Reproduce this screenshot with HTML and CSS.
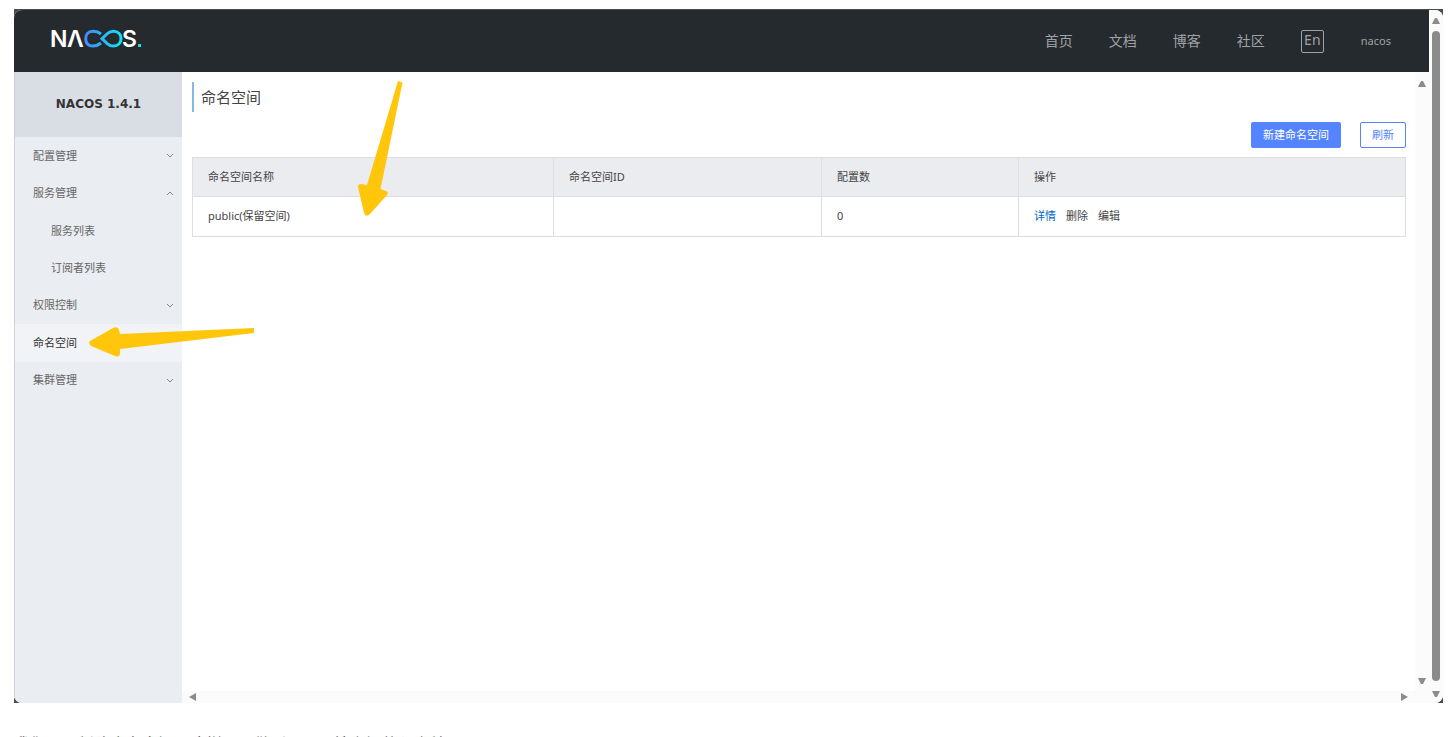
FILE: index.html
```html
<!DOCTYPE html>
<html lang="zh-CN">
<head>
<meta charset="utf-8">
<title>Nacos</title>
<link rel="stylesheet" href="styles.css">
</head>
<body>
<div class="window">
  <div class="screen">
    <div class="app">
      <header class="topbar">
        <a href="#" class="logo" aria-label="Nacos">
          <svg width="94" height="24" viewBox="0 0 94 24">
            <defs>
              <linearGradient id="loop" gradientUnits="userSpaceOnUse" x1="34" y1="0" x2="72" y2="0">
                <stop offset="0" stop-color="#4688ff"/>
                <stop offset="1" stop-color="#12e4f5"/>
              </linearGradient>
            </defs>
            <text class="logo-text" y="20" x="0 17 72">NΛS</text>
            <g fill="none" stroke="url(#loop)" stroke-width="3">
              <path d="M51 7 C48 4.6 46 4.3 43 4.3 C38 4.3 35.7 7.5 35.7 11.7 C35.7 16 38 19 43 19 C46 19 48 18.4 51 16"/>
              <path d="M52 11.7 L57.5 6.5 C59.3 4.9 61 4.3 63.4 4.3 C68 4.3 71 7.4 71 11.7 C71 16 68 19 63.4 19 C61 19 59.3 18.3 57.5 16.8 Z"/>
            </g>
            <rect x="88" y="17" width="3" height="3" fill="#19dff2"/>
          </svg>
        </a>
        <nav class="topnav">
          <a href="#">首页</a>
          <a href="#">文档</a>
          <a href="#">博客</a>
          <a href="#">社区</a>
          <button class="lang" type="button">En</button>
          <a href="#" class="user">nacos</a>
        </nav>
      </header>
      <div class="body">
        <aside class="sidebar">
          <h1 class="version">NACOS 1.4.1</h1>
          <nav class="menu">
            <a href="#">配置管理<svg class="chev" viewBox="0 0 8 5"><path d="M1 1 L4 4 L7 1"/></svg></a>
            <a href="#">服务管理<svg class="chev" viewBox="0 0 8 5"><path d="M1 4 L4 1 L7 4"/></svg></a>
            <a href="#" class="sub">服务列表</a>
            <a href="#" class="sub">订阅者列表</a>
            <a href="#">权限控制<svg class="chev" viewBox="0 0 8 5"><path d="M1 1 L4 4 L7 1"/></svg></a>
            <a href="#" class="active">命名空间</a>
            <a href="#">集群管理<svg class="chev" viewBox="0 0 8 5"><path d="M1 1 L4 4 L7 1"/></svg></a>
          </nav>
        </aside>
        <div class="pane">
          <main class="content">
            <h2 class="title">命名空间</h2>
            <div class="actions">
              <button class="btn primary" type="button">新建命名空间</button>
              <button class="btn" type="button">刷新</button>
            </div>
            <table class="grid">
              <colgroup><col class="c-name"><col class="c-id"><col class="c-count"><col></colgroup>
              <thead>
                <tr><th>命名空间名称</th><th>命名空间ID</th><th>配置数</th><th>操作</th></tr>
              </thead>
              <tbody>
                <tr>
                  <td>public(保留空间)</td><td></td><td>0</td>
                  <td><div class="ops"><a href="#" class="detail">详情</a><a href="#">删除</a><a href="#">编辑</a></div></td>
                </tr>
              </tbody>
            </table>
          </main>
          <div class="hscroll">
            <svg width="7" height="8" viewBox="0 0 7 8"><path d="M0 4 L7 0 V8 Z"/></svg>
            <svg width="7" height="8" viewBox="0 0 7 8"><path d="M7 4 L0 0 V8 Z"/></svg>
          </div>
        </div>
        <div class="vscroll inner">
          <svg width="8" height="6" viewBox="0 0 8 6"><path d="M3 0 H5 L8 6 H0 Z"/></svg>
          <svg width="8" height="6" viewBox="0 0 8 6"><path d="M3 6 H5 L8 0 H0 Z"/></svg>
        </div>
      </div>
    </div>
    <div class="vscroll outer">
      <svg width="8" height="6" viewBox="0 0 8 6"><path d="M3 0 H5 L8 6 H0 Z"/></svg>
      <div class="thumb"></div>
      <svg width="8" height="6" viewBox="0 0 8 6"><path d="M3 6 H5 L8 0 H0 Z"/></svg>
    </div>
  </div>
  <svg class="arrow to-row" width="48" height="140" viewBox="0 0 48 140"><path d="M40 3 L44.5 4.5 L22.5 111 L28 113 Q31 114 29 117 L12 136 Q8 140 6 135 L0 109 Q0 106 3 106 L9 107 Z"/></svg>
  <svg class="arrow to-menu" width="182" height="32" viewBox="0 0 182 32"><path d="M1 15 L24 2 Q29 0 30 4 L31 8 L165 2 V7 L31 23 V27 Q31 32 26 30 L2 20 Q-1 17 1 15 Z"/></svg>
</div>
<p class="caption">我们可以新建命名空间，这样可以做到不同环境之间的隔离效果</p>
</body>
</html>
```
FILE: styles.css
```css
* { box-sizing: border-box; }
body {
  margin: 0;
  height: 100vh;
  overflow: hidden;
  display: flex;
  flex-direction: column;
  padding: 9px 9px 0 14px;
  background: #fff;
  color: #444;
  font: 11px/16px "Noto Sans", "Noto Sans CJK SC", sans-serif;
}
a { color: inherit; text-decoration: none; }
button { font: inherit; cursor: pointer; }
h1, h2, p { margin: 0; }

.window { position: relative; flex: 1; display: flex; padding-top: 1px; background: #4b4c50; }
.screen { flex: 1; display: flex; overflow: hidden; border-radius: 8px; background: #fff; }
.app { flex: 1; display: flex; flex-direction: column; }

.topbar {
  height: 62px;
  display: flex;
  align-items: center;
  justify-content: space-between;
  padding: 0 38px 0 36px;
  background: #252a2f;
  color: #a0a2a4;
}
.logo { display: flex; padding-bottom: 4px; }
.logo-text { font: 600 23px Inter, sans-serif; fill: #fff; }
.topnav { display: flex; align-items: center; font-size: 14px; line-height: 24px; }
.topnav a { margin-right: 36px; }
.topnav .lang {
  width: 23px;
  height: 23px;
  padding: 0 0 3px;
  margin-right: 37px;
  border: 1px solid #a0a2a4;
  border-radius: 2px;
  background: none;
  color: inherit;
  font-size: 14px;
  line-height: 18px;
}
.topnav .user { margin: 0; font-size: 11px; }

.body { flex: 1; display: flex; }
.sidebar { width: 168px; border-left: 1px solid #cdd0d6; background: #eaedf1; }
.version {
  height: 65px;
  background: #d9dde4;
  color: #333;
  font: bold 12px/65px "DejaVu Sans", sans-serif;
  text-align: center;
}
.menu { display: grid; grid-template-rows: repeat(7, 1fr); height: 262px; color: #666; }
.menu a { display: flex; align-items: center; justify-content: space-between; padding: 0 8px 0 18px; }
.menu .sub { padding-left: 36px; }
.menu .active { background: #f2f3f7; color: #333; }
.chev { width: 8px; height: 5px; fill: none; stroke: #888; }

.pane { flex: 1; display: flex; flex-direction: column; }
.content { flex: 1; padding: 10px 9px 0 10px; }
.title {
  padding-left: 7px;
  border-left: 2px solid #86b8e0;
  font-size: 15px;
  font-weight: 400;
  line-height: 30px;
}
.actions { display: flex; justify-content: flex-end; gap: 19px; padding: 10px 0 9px; }
.btn {
  height: 26px;
  padding: 0 11px 1px;
  border: 1px solid #5584ff;
  border-radius: 2px;
  background: #fff;
  color: #5584ff;
}
.btn.primary { background: #5584ff; color: #fff; }

.grid { width: 100%; table-layout: fixed; border-collapse: collapse; }
.c-name { width: 361px; }
.c-id { width: 268px; }
.c-count { width: 197px; }
.grid th, .grid td {
  height: 39px;
  padding: 0 15px 1px;
  border: 1px solid #dcdee3;
  font-weight: 400;
  text-align: left;
}
.grid td { height: 40px; padding-bottom: 2px; }
.grid th { background: #ebecf0; }
.ops { display: flex; gap: 10px; }
.detail { color: #06c; }

.hscroll { height: 12px; display: flex; align-items: center; justify-content: space-between; padding: 0 7px; background: #fbfbfb; }
.vscroll { width: 14px; display: flex; flex-direction: column; align-items: center; justify-content: space-between; background: #fbfbfb; }
.hscroll, .vscroll { fill: #8b8b8b; }
.inner { padding: 9px 0 19px; }
.outer { padding: 8px 0 6px; }
.thumb { flex: 1; width: 8px; margin: 7px 0 10px; border-radius: 4px; background: #8b8b8b; }

.arrow { position: absolute; fill: #ffc60b; }
.to-row { left: 344px; top: 69px; }
.to-menu { left: 75px; top: 317px; }

.caption { height: 34px; padding-top: 29px; font-size: 16px; line-height: 24px; white-space: nowrap; }
```
